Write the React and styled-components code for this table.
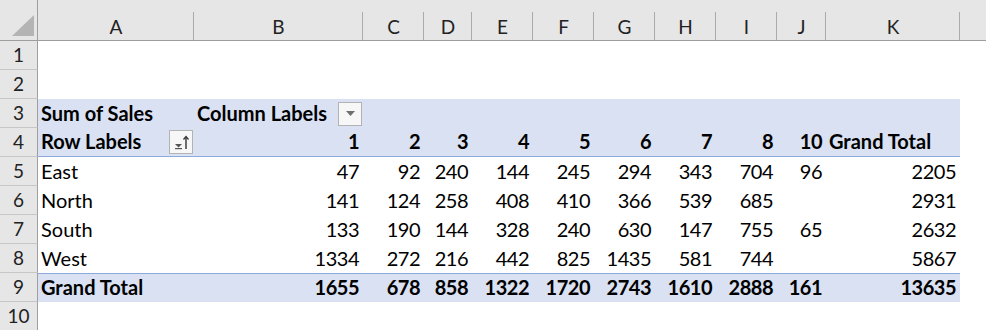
import styled, { createGlobalStyle, css } from "styled-components";

const GlobalStyle = createGlobalStyle`
  body {
    margin: 0;
    background: #ffffff;
    font-family: Lato, "Open Sans", sans-serif;
    color: #000000;
  }
`;

const columns = [
  { key: "A", width: 156 },
  { key: "B", width: 169 },
  { key: "C", width: 61 },
  { key: "D", width: 48 },
  { key: "E", width: 61 },
  { key: "F", width: 61 },
  { key: "G", width: 61 },
  { key: "H", width: 61 },
  { key: "I", width: 61 },
  { key: "J", width: 49 },
  { key: "K", width: 134 },
];

const template = `38px ${columns.map((c) => c.width + "px").join(" ")} 1fr`;

const regions = [
  ["East", 47, 92, 240, 144, 245, 294, 343, 704, 96, 2205],
  ["North", 141, 124, 258, 408, 410, 366, 539, 685, "", 2931],
  ["South", 133, 190, 144, 328, 240, 630, 147, 755, 65, 2632],
  ["West", 1334, 272, 216, 442, 825, 1435, 581, 744, "", 5867],
];

const totals = ["Grand Total", 1655, 678, 858, 1322, 1720, 2743, 1610, 2888, 161, 13635];

const Sheet = styled.div`
  width: 986px;
  height: 330px;
  overflow: hidden;
  font-size: 20px;
`;

const HeaderRow = styled.div`
  display: grid;
  grid-template-columns: ${template};
  height: 40px;
  background: #e6e6e6;
  border-bottom: 1px solid #9e9e9e;
`;

const Corner = styled.div`
  border-right: 1px solid #9e9e9e;
  display: flex;
  align-items: flex-end;
  justify-content: flex-end;
  padding: 0 3px 4px 0;
`;

const ColHeader = styled.div`
  position: relative;
  display: flex;
  align-items: flex-end;
  justify-content: center;
  padding-bottom: 2px;
  line-height: 23px;
  color: #222222;
  font-size: 19px;

  &::after {
    content: "";
    position: absolute;
    top: 12px;
    bottom: 0;
    right: 0;
    width: 1px;
    background: #ababab;
  }
`;

const Row = styled.div`
  display: grid;
  grid-template-columns: ${template};
  height: 29px;
`;

const RowNum = styled.div`
  display: flex;
  align-items: flex-end;
  justify-content: center;
  padding-bottom: 3px;
  line-height: 23px;
  font-size: 19px;
  background: #e6e6e6;
  border-right: 1px solid #9e9e9e;
  border-bottom: 1px solid #c6c6c6;
  color: #222222;
`;

const Body = styled.div`
  grid-column: 2 / span 11;
  display: grid;
  grid-template-columns: ${columns.map((c) => c.width + "px").join(" ")};
  ${(p) =>
    p.$fill &&
    css`
      background: #d9e1f2;
    `}
  ${(p) =>
    p.$lineBelow &&
    css`
      border-bottom: 1px solid #8ea9db;
    `}
  ${(p) =>
    p.$lineAbove &&
    css`
      border-top: 1px solid #8ea9db;
    `}
`;

const Cell = styled.div`
  display: flex;
  align-items: flex-end;
  justify-content: ${(p) => (p.$right ? "flex-end" : "flex-start")};
  padding: 0 4px 3px 3px;
  line-height: 23px;
  white-space: nowrap;
  font-weight: ${(p) => (p.$bold ? 700 : 400)};
  letter-spacing: ${(p) => (p.$right ? "-0.5px" : "0")};
  min-width: 0;
`;

const LabelCell = styled(Cell)`
  justify-content: space-between;
  align-items: center;
  padding: 0 1px 0 3px;
`;

const Label = styled.span`
  align-self: flex-end;
  padding-bottom: 3px;
`;

const PivotButton = styled.div`
  width: 24px;
  height: 24px;
  box-sizing: border-box;
  border: 1px solid #b3b3b3;
  background: #f7f7f7;
  display: flex;
  align-items: center;
  justify-content: center;
`;

function DropIcon() {
  return (
    <svg width="11" height="7" viewBox="0 0 11 7">
      <path d="M1 1 L10 1 L5.5 6 Z" fill="#6f6f6f" />
    </svg>
  );
}

function SortIcon() {
  return (
    <svg width="17" height="17" viewBox="0 0 17 17">
      <path d="M2 10 L9 10 L5.5 13.5 Z" fill="#555555" />
      <rect x="2" y="14" width="7" height="1.2" fill="#555555" />
      <path d="M13 15 L13 3" stroke="#333333" strokeWidth="1.4" />
      <path d="M10.5 5.5 L13 2.5 L15.5 5.5" stroke="#333333" strokeWidth="1.2" fill="none" />
    </svg>
  );
}

function CornerMark() {
  return (
    <svg width="22" height="21" viewBox="0 0 22 21">
      <path d="M0 21 L22 21 L22 0 Z" fill="#b4b4b4" />
    </svg>
  );
}

function DataRow({ num, values, bold, fill, lineAbove }) {
  return (
    <Row>
      <RowNum>{num}</RowNum>
      <Body $fill={fill} $lineAbove={lineAbove}>
        {values.map((v, i) => (
          <Cell key={i} $bold={bold} $right={i > 0}>
            {v}
          </Cell>
        ))}
      </Body>
      <div />
    </Row>
  );
}

export default function App() {
  return (
    <>
      <GlobalStyle />
      <Sheet>
        <HeaderRow>
          <Corner>
            <CornerMark />
          </Corner>
          {columns.map((c) => (
            <ColHeader key={c.key}>{c.key}</ColHeader>
          ))}
          <div />
        </HeaderRow>

        <Row>
          <RowNum>1</RowNum>
          <Body />
          <div />
        </Row>
        <Row>
          <RowNum>2</RowNum>
          <Body />
          <div />
        </Row>

        <Row>
          <RowNum>3</RowNum>
          <Body $fill>
            <Cell $bold>Sum of Sales</Cell>
            <LabelCell $bold>
              <Label>Column Labels</Label>
              <PivotButton>
                <DropIcon />
              </PivotButton>
            </LabelCell>
          </Body>
          <div />
        </Row>

        <Row>
          <RowNum>4</RowNum>
          <Body $fill $lineBelow>
            <LabelCell $bold>
              <Label>Row Labels</Label>
              <PivotButton>
                <SortIcon />
              </PivotButton>
            </LabelCell>
            {[1, 2, 3, 4, 5, 6, 7, 8, 10].map((n) => (
              <Cell key={n} $bold $right>
                {n}
              </Cell>
            ))}
            <Cell $bold>Grand Total</Cell>
          </Body>
          <div />
        </Row>

        {regions.map((r, i) => (
          <DataRow key={r[0]} num={i + 5} values={r} />
        ))}

        <DataRow num={9} values={totals} bold fill lineAbove />

        <Row>
          <RowNum>10</RowNum>
          <Body />
          <div />
        </Row>
      </Sheet>
    </>
  );
}
